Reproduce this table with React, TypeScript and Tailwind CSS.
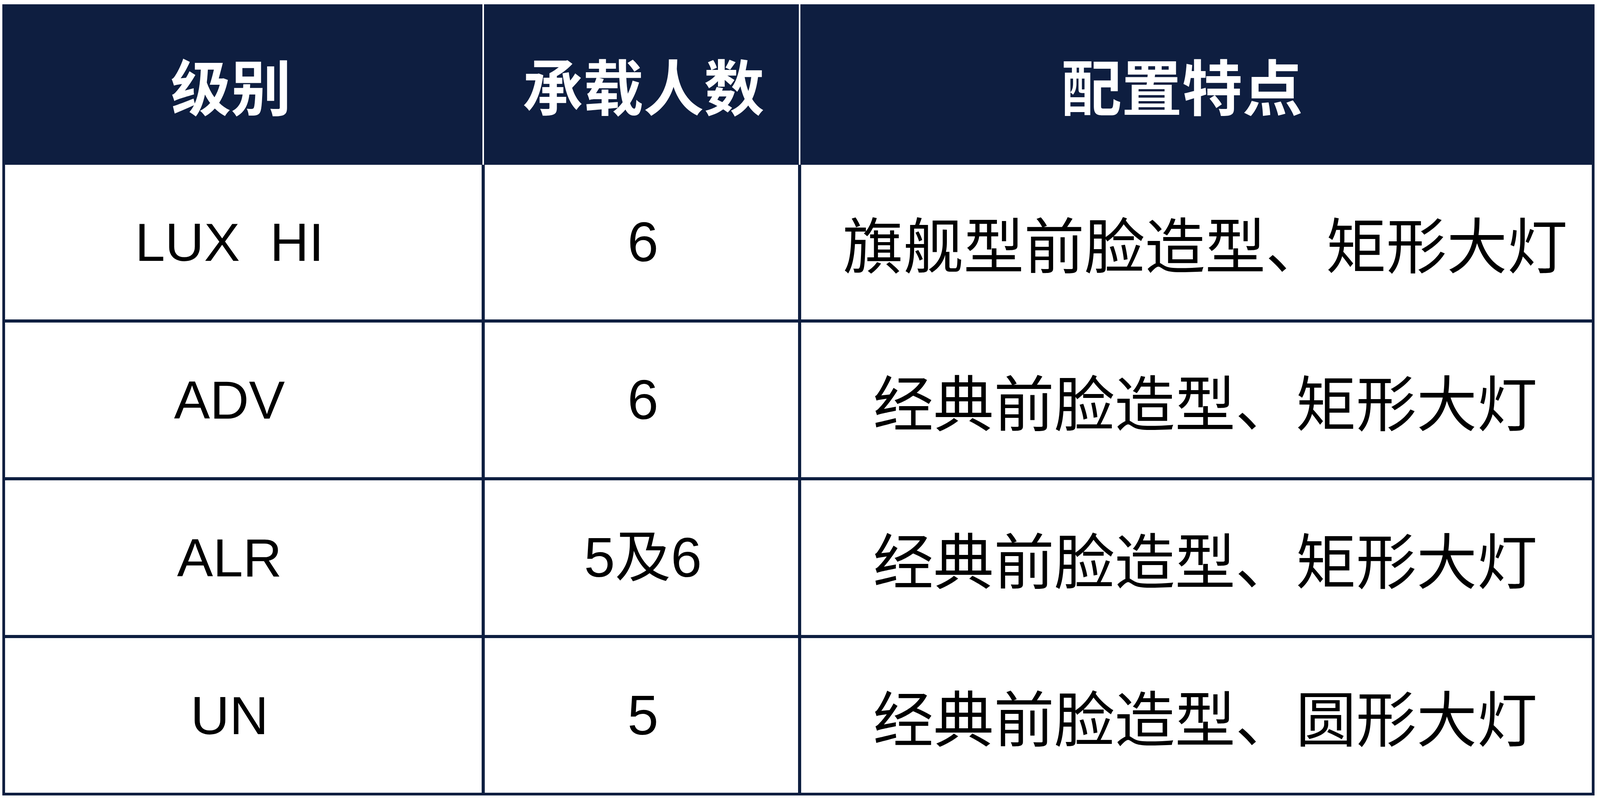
// Vehicle trim comparison table: 级别 / 承载人数 / 配置特点
// Widths are fluid (fr / vw) so the table keeps the reference proportions
// whatever the viewport width turns out to be; heights are fixed.

const rows = [
  { level: "LUX  HI", seats: "6", feature: "旗舰型前脸造型、矩形大灯" },
  { level: "ADV", seats: "6", feature: "经典前脸造型、矩形大灯" },
  { level: "ALR", seats: "5及6", feature: "经典前脸造型、矩形大灯" },
  { level: "UN", seats: "5", feature: "经典前脸造型、圆形大灯" },
];

const cjk = "font-['Noto_Sans_CJK_SC',sans-serif]";
const latin = "font-['Liberation_Sans','Noto_Sans_CJK_SC',sans-serif]";

export default function App() {
  return (
    <div className="w-full h-[2064px] bg-white pt-[11px] pl-[0.155vw] pr-[0.33vw]">
      <div className="w-full h-[2026px] flex flex-col bg-[#0e1e40]">
        {/* Header */}
        <div
          className={`h-[411px] shrink-0 grid grid-cols-[1540fr_8px_1013fr_8px_2557fr] px-[7px] text-white font-bold text-[3.775vw] leading-none ${cjk}`}
        >
          <div className="flex items-center justify-center pr-[1.55vw]">级别</div>
          <div className="flex justify-center">
            <div className="w-[4px] bg-white" />
          </div>
          <div className="flex items-center justify-center pl-[0.27vw]">承载人数</div>
          <div className="flex justify-center">
            <div className="w-[4px] bg-white" />
          </div>
          <div className="flex items-center justify-center pr-[1.82vw]">配置特点</div>
        </div>

        {/* Body */}
        <div className="flex-1 grid grid-cols-[1540fr_1013fr_2557fr] grid-rows-4 gap-[8px] px-[7px] pb-[7px]">
          {rows.map((r) => (
            <div key={r.level} className="contents">
              <div
                className={`bg-white flex items-center justify-center pr-[1.74vw] text-black text-[3.37vw] leading-none whitespace-pre ${latin}`}
              >
                {r.level}
              </div>
              <div
                className={`bg-white flex items-center justify-center pl-[0.2vw] text-black text-[3.485vw] leading-none ${latin}`}
              >
                {r.seats}
              </div>
              <div
                className={`bg-white flex items-center justify-center pl-[1.08vw] text-black text-[3.775vw] leading-none whitespace-nowrap ${cjk}`}
              >
                {r.feature}
              </div>
            </div>
          ))}
        </div>
      </div>
    </div>
  );
}
